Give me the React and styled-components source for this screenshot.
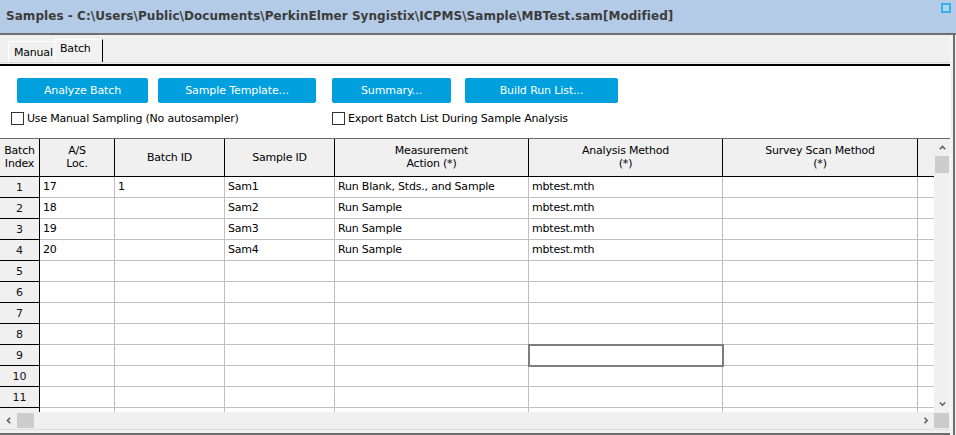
import React from 'react';
import styled, { createGlobalStyle } from 'styled-components';

const Global = createGlobalStyle`
  *, *::before, *::after { box-sizing: border-box; }
  html, body { margin: 0; padding: 0; background: #f0f0f0; }
  body {
    font-family: "DejaVu Sans", Verdana, sans-serif;
    font-size: 11px;
    color: #000;
  }
`;

const Window = styled.div`
  width: 956px;
  height: 435px;
  display: flex;
  flex-direction: column;
  overflow: hidden;
  background: #f0f0f0;
`;

const TitleBar = styled.div`
  height: 35px;
  flex: none;
  background: #b4cbe7;
  border-bottom: 2px solid #6e6e6e;
  display: flex;
  align-items: center;
  justify-content: space-between;
  padding: 0 5px 0 6px;
`;

const TitleText = styled.div`
  font-weight: bold;
  font-size: 12px;
  color: #3c3c3c;
  letter-spacing: 0.05px;
  white-space: nowrap;
  margin-top: -1px;
`;

const MaxBox = styled.div`
  align-self: flex-start;
  margin-top: 3px;
  width: 10px;
  height: 10px;
  border: 2px solid #3eaee6;
  background: #a9d6f2;
`;

const Body = styled.div`
  flex: 1;
  display: flex;
  min-height: 0;
`;

const Main = styled.div`
  width: 950px;
  display: flex;
  flex-direction: column;
`;

const RightEdge = styled.div`
  width: 6px;
  border-left: 1px solid #fafafa;
  border-right: 1px solid #f0f0f0;
  background: linear-gradient(to right, #f0f0f0 2px, #6e6e6e 2px);
`;

const TabStrip = styled.div`
  height: 27px;
  display: flex;
  align-items: flex-end;
  padding-left: 8px;
  background: #f0f0f0;
`;

const Tab = styled.div`
  height: ${p => (p.$active ? 23 : 21)}px;
  width: ${p => (p.$active ? 49 : 47)}px;
  margin-left: ${p => (p.$active ? -1 : 0)}px;
  border-left: 1px solid #fff;
  border-top: 1px solid #fff;
  border-right: 1px solid ${p => (p.$active ? '#000' : '#e6e6e6')};
  border-top-left-radius: 2px;
  background: ${p => (p.$active ? '#f2f2f2' : '#f0f0f0')};
  padding: ${p => (p.$active ? '2px 0 0 5px' : '4px 0 0 5px')};
  font-size: 11px;
  letter-spacing: -0.2px;
  color: #000;
  position: relative;
  z-index: ${p => (p.$active ? 1 : 0)};
`;

const TabRule = styled.div`
  height: 4px;
  border-top: 1px solid #dadada;
  border-bottom: 2px solid #000;
  background: #f0f0f0;
`;

const Panel = styled.div`
  height: 73px;
  background: #fff;
  border-bottom: 1px solid #6a6a6a;
  display: flex;
  padding-top: 12px;
`;

const Group = styled.div`
  width: ${p => p.$w}px;
  padding-left: ${p => p.$pl}px;
  display: flex;
  flex-direction: column;
  gap: 9px;
`;

const ButtonRow = styled.div`
  display: flex;
  gap: ${p => p.$gap}px;
  padding-left: ${p => p.$pl || 0}px;
`;

const Button = styled.button`
  width: ${p => p.$w}px;
  height: 25px;
  border: none;
  border-radius: 2px;
  background: #00a0df;
  color: #fff;
  font-family: "DejaVu Sans", Verdana, sans-serif;
  font-size: 11px;
  letter-spacing: -0.1px;
  padding: 0;
  display: flex;
  align-items: center;
  justify-content: center;
`;

const CheckRow = styled.label`
  display: flex;
  align-items: center;
  gap: 3px;
  height: 13px;
  font-size: 11px;
  letter-spacing: -0.2px;
  white-space: nowrap;
`;

const Box = styled.span`
  width: 13px;
  height: 13px;
  border: 1px solid #333;
  background: #fff;
  flex: none;
`;

const GridArea = styled.div`
  height: 273px;
  display: flex;
  background: #fff;
`;

const Viewport = styled.div`
  width: 934px;
  height: 273px;
  overflow: hidden;
`;

const Grid = styled.div`
  display: grid;
  grid-template-columns: 40px 75px 110px 110px 194px 194px 195px 16px;
  grid-template-rows: 38px;
  grid-auto-rows: 21px;
`;

const HeadCell = styled.div`
  background: #f0f0f0;
  border-right: ${p => (p.$last ? 'none' : '1px solid #000')};
  border-bottom: 1px solid #000;
  display: flex;
  align-items: center;
  justify-content: center;
  text-align: center;
  white-space: pre-line;
  line-height: 13px;
  letter-spacing: -0.2px;
  color: #000;
  padding-bottom: 1px;
`;

const IndexCell = styled.div`
  background: #f0f0f0;
  border-right: 1px solid #000;
  border-bottom: 1px solid #000;
  display: flex;
  align-items: center;
  justify-content: center;
  font-weight: normal;
  color: #111;
`;

const Cell = styled.div`
  background: #fff;
  border-right: ${p => (p.$last ? 'none' : '1px solid #c0c0c0')};
  border-bottom: 1px solid #c0c0c0;
  padding-left: 3px;
  line-height: 20px;
  white-space: nowrap;
  letter-spacing: -0.2px;
  ${p => p.$selected && `
    outline: 2px solid #7d7d7d;
    outline-offset: -1px;
    position: relative;
    z-index: 1;
  `}
`;

const VScroll = styled.div`
  width: 16px;
  background: #f0f0f0;
  display: flex;
  flex-direction: column;
  align-items: center;
`;

const ArrowBox = styled.div`
  width: ${p => (p.$h ? 17 : 16)}px;
  height: ${p => (p.$h ? 15 : 17)}px;
  display: flex;
  align-items: center;
  justify-content: center;
  flex: none;
`;

const VThumb = styled.div`
  width: 14px;
  height: 17px;
  background: #cdcdcd;
  flex: none;
`;

const Spacer = styled.div`
  flex: 1;
`;

const HScroll = styled.div`
  height: 17px;
  display: flex;
  background: #f0f0f0;
`;

const HTrack = styled.div`
  width: 934px;
  display: flex;
  align-items: center;
`;

const HThumb = styled.div`
  width: 17px;
  height: 15px;
  background: #cdcdcd;
  flex: none;
`;

const Corner = styled.div`
  width: 15px;
  height: 15px;
  margin-top: 1px;
  background: #cbcbcb;
`;

const BottomEdge = styled.div`
  height: 6px;
  border-top: 1px solid #dcdcdc;
  border-bottom: 2px solid #6e6e6e;
  background: #f0f0f0;
`;

const Chevron = ({ dir }) => {
  const pts = {
    up: '0.8,4.2 3.5,1.5 6.2,4.2',
    down: '0.8,1.5 3.5,4.2 6.2,1.5',
    left: '4.2,0.8 1.5,3.5 4.2,6.2',
    right: '1.5,0.8 4.2,3.5 1.5,6.2',
  }[dir];
  const vertical = dir === 'up' || dir === 'down';
  return (
    <svg width={vertical ? 7 : 6} height={vertical ? 6 : 7} viewBox={vertical ? '0 0 7 6' : '0 0 6 7'}>
      <polyline points={pts} fill="none" stroke="#606060" strokeWidth="1.6" />
    </svg>
  );
};

const headers = [
  'Batch\nIndex',
  'A/S\nLoc.',
  'Batch ID',
  'Sample ID',
  'Measurement\nAction (*)',
  'Analysis Method\n(*)',
  'Survey Scan Method\n(*)',
  '',
];

const data = [
  ['17', '1', 'Sam1', 'Run Blank, Stds., and Sample', 'mbtest.mth', ''],
  ['18', '', 'Sam2', 'Run Sample', 'mbtest.mth', ''],
  ['19', '', 'Sam3', 'Run Sample', 'mbtest.mth', ''],
  ['20', '', 'Sam4', 'Run Sample', 'mbtest.mth', ''],
];

const rows = Array.from({ length: 12 }, (_, i) => data[i] || ['', '', '', '', '', '']);

export default function App() {
  return (
    <Window>
      <Global />
      <TitleBar>
        <TitleText>
          Samples - C:\Users\Public\Documents\PerkinElmer Syngistix\ICPMS\Sample\MBTest.sam[Modified]
        </TitleText>
        <MaxBox />
      </TitleBar>
      <Body>
        <Main>
          <TabStrip>
            <Tab>Manual</Tab>
            <Tab $active>Batch</Tab>
          </TabStrip>
          <TabRule />
          <Panel>
            <Group $w={332} $pl={11}>
              <ButtonRow $gap={10} $pl={6}>
                <Button $w={131}>Analyze Batch</Button>
                <Button $w={158}>Sample Template...</Button>
              </ButtonRow>
              <CheckRow>
                <Box />
                Use Manual Sampling (No autosampler)
              </CheckRow>
            </Group>
            <Group $w={300} $pl={0}>
              <ButtonRow $gap={14}>
                <Button $w={119}>Summary...</Button>
                <Button $w={153}>Build Run List...</Button>
              </ButtonRow>
              <CheckRow>
                <Box />
                Export Batch List During Sample Analysis
              </CheckRow>
            </Group>
          </Panel>
          <GridArea>
            <Viewport>
              <Grid>
                {headers.map((h, i) => (
                  <HeadCell key={'h' + i} $last={i === headers.length - 1}>
                    {h}
                  </HeadCell>
                ))}
                {rows.map((r, ri) => (
                  <React.Fragment key={ri}>
                    <IndexCell>{ri + 1}</IndexCell>
                    {r.map((v, ci) => (
                      <Cell key={ci} $selected={ri === 8 && ci === 4}>
                        {v}
                      </Cell>
                    ))}
                    <Cell $last />
                  </React.Fragment>
                ))}
              </Grid>
            </Viewport>
            <VScroll>
              <ArrowBox>
                <Chevron dir="up" />
              </ArrowBox>
              <VThumb />
              <Spacer />
              <ArrowBox>
                <Chevron dir="down" />
              </ArrowBox>
            </VScroll>
          </GridArea>
          <HScroll>
            <HTrack>
              <ArrowBox $h>
                <Chevron dir="left" />
              </ArrowBox>
              <HThumb />
              <Spacer />
              <ArrowBox $h>
                <Chevron dir="right" />
              </ArrowBox>
            </HTrack>
            <Corner />
          </HScroll>
          <BottomEdge />
        </Main>
        <RightEdge />
      </Body>
    </Window>
  );
}
